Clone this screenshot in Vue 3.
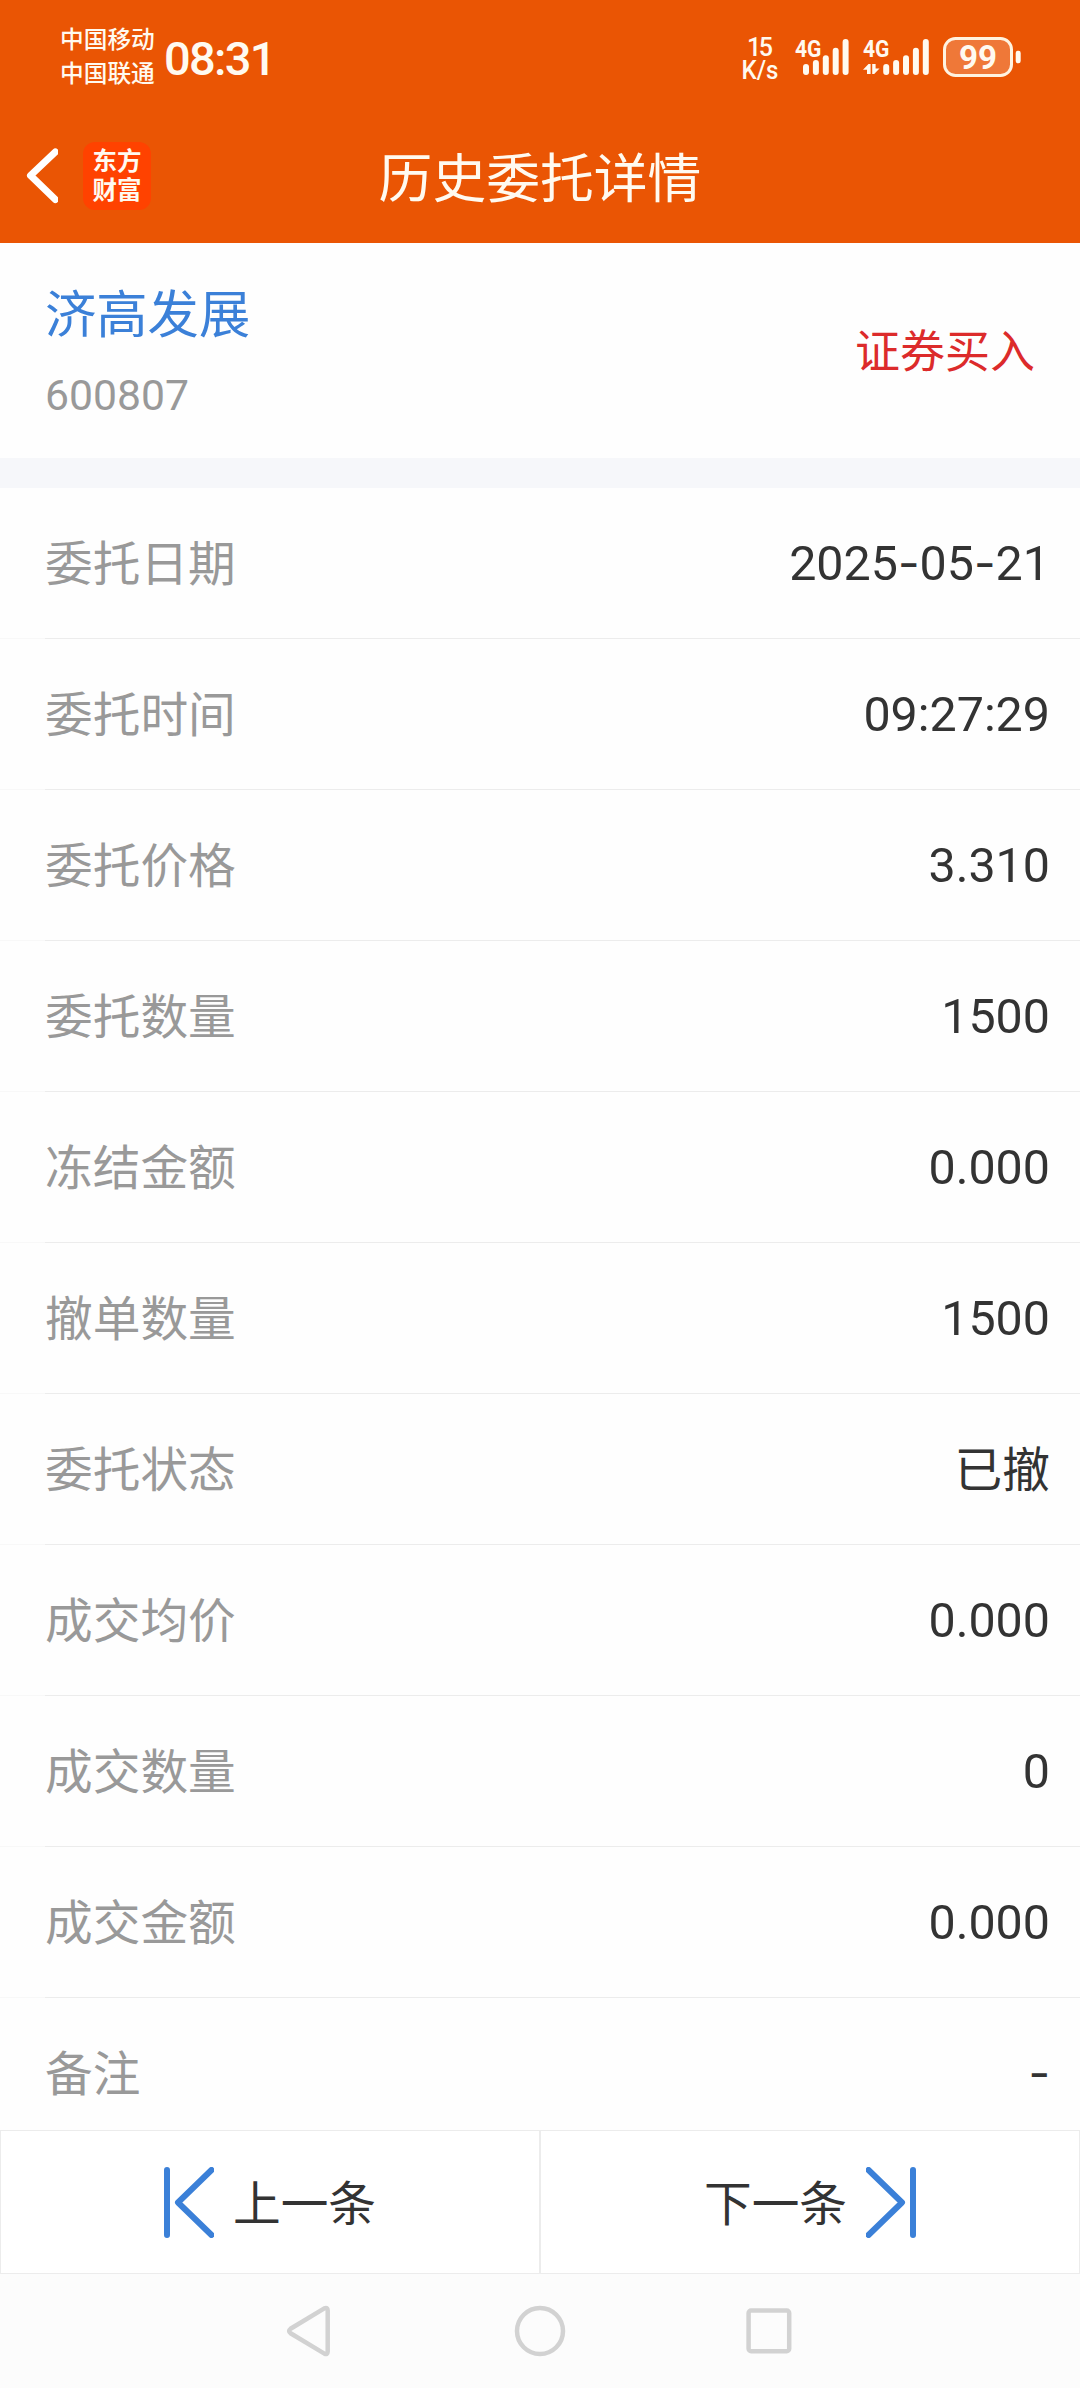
<script setup>
const rows = [
  { label: '委托日期', value: '2025-05-21' },
  { label: '委托时间', value: '09:27:29' },
  { label: '委托价格', value: '3.310' },
  { label: '委托数量', value: '1500' },
  { label: '冻结金额', value: '0.000' },
  { label: '撤单数量', value: '1500' },
  { label: '委托状态', value: '已撤', cjk: true },
  { label: '成交均价', value: '0.000' },
  { label: '成交数量', value: '0' },
  { label: '成交金额', value: '0.000' },
  { label: '备注', value: '-' },
]
// Hyphens are set in a wider face than the digits.
const parts = (value) => value.split(/(-)/).filter(Boolean)
const bars = [
  { x: 0, top: 64 },
  { x: 9.9, top: 60 },
  { x: 19.8, top: 55.3 },
  { x: 29.7, top: 47.7 },
  { x: 39.6, top: 39 },
]
</script>

<template>
  <div class="screen">
    <header class="top">
      <div class="status">
        <div class="carriers">
          <span>中国移动</span>
          <span>中国联通</span>
        </div>
        <div class="clock">08:31</div>
        <svg class="indicators" width="300" height="120" viewBox="730 0 300 120">
          <g class="small">
            <text x="747" y="56" textLength="26">15</text>
            <text x="741.5" y="78.5" textLength="37" lengthAdjust="spacingAndGlyphs">K/s</text>
          </g>
          <g class="net">
            <text x="795" y="57" textLength="26.5" lengthAdjust="spacingAndGlyphs">4G</text>
            <text x="863" y="57" textLength="26.5" lengthAdjust="spacingAndGlyphs">4G</text>
          </g>
          <g fill="#fffaf0">
            <rect v-for="b in bars" :key="'a' + b.x" :x="803 + b.x" :y="b.top" width="6" :height="75 - b.top" rx="3" />
            <rect v-for="b in bars" :key="'b' + b.x" :x="883.2 + b.x" :y="b.top" width="6" :height="75 - b.top" rx="3" />
            <path d="M863 69.8 L868.5 64 H870.6 V74 H867 V69.8 Z" />
            <path d="M872.2 64 H875.6 V68.5 H879.5 L874.2 74 H872.2 Z" />
            <rect x="1015.7" y="50.7" width="5" height="12.6" rx="2.2" />
          </g>
          <rect x="944.5" y="38.5" width="67" height="37" rx="11" fill="#ef7838" stroke="#fff3e0" stroke-width="3" />
          <text class="battery" x="959" y="69" textLength="38" lengthAdjust="spacingAndGlyphs">99</text>
        </svg>
      </div>
      <div class="titlebar">
        <svg class="back" width="32" height="60" viewBox="26 146 32 60">
          <path d="M55.3 152 L30.5 175.5 L55.3 199.5" fill="none" stroke="#fff" stroke-width="7" stroke-linecap="round" stroke-linejoin="round" />
        </svg>
        <div class="logo"><span>东方</span><span>财富</span></div>
        <h1>历史委托详情</h1>
      </div>
    </header>

    <section class="summary">
      <div>
        <div class="name">济高发展</div>
        <div class="code">600807</div>
      </div>
      <div class="side">证券买入</div>
    </section>

    <main class="list">
      <div v-for="r in rows" :key="r.label" class="row">
        <span class="label">{{ r.label }}</span>
        <span class="value" :class="{ cjk: r.cjk }"><span v-for="(p, i) in parts(r.value)" :key="i" :class="{ dash: p === '-' }">{{ p }}</span></span>
      </div>
    </main>

    <footer class="pager">
      <button>
        <svg width="50" height="71" viewBox="0 0 50 71">
          <path d="M3 3 V68 M47.5 3 L14 35.5 L47.5 68" />
        </svg>
        <span>上一条</span>
      </button>
      <button>
        <span>下一条</span>
        <svg width="50" height="71" viewBox="0 0 50 71">
          <path d="M47 3 V68 M2.5 3 L36 35.5 L2.5 68" />
        </svg>
      </button>
    </footer>

    <nav class="sysnav">
      <svg width="1080" height="114" viewBox="0 2274 1080 114" fill="none" stroke="#d2d2d2" stroke-width="4.5">
        <path d="M324.3 2308.4 L290.6 2328.7 Q287.6 2331 290.6 2333.3 L324.3 2353.6 Q327.7 2355 327.7 2351.5 V2310.5 Q327.7 2307 324.3 2308.4 Z" />
        <circle cx="540" cy="2331" r="23" />
        <rect x="748.6" y="2310.6" width="40.6" height="40.6" rx="2.5" />
      </svg>
    </nav>
  </div>
</template>

<style>
body {
  margin: 0;
  background: #fff;
}
</style>

<style scoped>
.screen {
  width: 1080px;
  height: 2388px;
  display: flex;
  flex-direction: column;
  overflow: hidden;
  background: #fefefe;
  font-family: Roboto, "Noto Sans CJK SC", sans-serif;
}
.top {
  height: 243px;
  flex: none;
  background: #ea5504;
  color: #fffaf0;
}
.status {
  height: 120px;
  display: flex;
}
.carriers {
  width: 96px;
  margin: 23px 0 0 60px;
  display: flex;
  flex-direction: column;
  font-size: 23.7px;
  font-weight: 500;
  line-height: 34px;
  white-space: nowrap;
}
.clock {
  margin: 31px 0 0 8px;
  font-size: 47px;
  font-weight: 500;
  line-height: 56px;
  letter-spacing: -1.7px;
}
.indicators {
  margin-left: auto;
  margin-right: 50px;
}
.indicators text {
  fill: #fffaf0;
  font-family: Roboto, sans-serif;
}
.small text {
  font-size: 25px;
  font-weight: 500;
}
.net text {
  font-size: 24.5px;
  font-weight: 700;
}
.indicators .battery {
  font-size: 34px;
  font-weight: 700;
}
.titlebar {
  position: relative;
  height: 123px;
  display: flex;
  align-items: flex-start;
}
.back {
  margin: 26px 0 0 26px;
}
.logo {
  width: 68px;
  height: 68px;
  margin: 22px 0 0 25px;
  padding-bottom: 5px;
  box-sizing: border-box;
  border-radius: 12px;
  background: #ff4200;
  display: flex;
  flex-direction: column;
  align-items: center;
  justify-content: center;
  font-family: "Noto Sans CJK SC", sans-serif;
  font-size: 24.5px;
  font-weight: 700;
  line-height: 29px;
}
h1 {
  position: absolute;
  left: 0;
  right: 0;
  top: 20px;
  margin: 0;
  text-align: center;
  font-size: 53.8px;
  font-weight: 400;
  line-height: 80px;
  color: #fffaf0;
}
.summary {
  height: 215px;
  flex: none;
  box-sizing: border-box;
  padding: 0 45px;
  display: flex;
  justify-content: space-between;
}
.name {
  margin-top: 37px;
  font-size: 51.3px;
  line-height: 72px;
  color: #3b80d8;
}
.code {
  margin-top: 15px;
  font-size: 42.7px;
  line-height: 56px;
  color: #999;
}
.side {
  margin-top: 78px;
  font-size: 45px;
  line-height: 64px;
  color: #dc2b2b;
}
.list {
  height: 1672px;
  flex: none;
  box-sizing: border-box;
  border-top: 30px solid #f6f7fa;
  overflow: hidden;
}
.row {
  height: 151px;
  box-sizing: border-box;
  padding: 0 30px 1px 45px;
  display: flex;
  align-items: center;
  justify-content: space-between;
  background: linear-gradient(to right, #f8f8f8 45px, #ececec 45px) bottom / 100% 1px no-repeat;
  font-size: 47.7px;
}
.label {
  padding-bottom: 6px;
  color: #999;
}
.value {
  color: #333;
  font-size: 48.4px;
}
.value.cjk {
  padding-bottom: 6px;
  font-size: 47.7px;
}
.dash {
  font-family: Inter, sans-serif;
  font-size: 47px;
  line-height: 1;
}
.pager {
  height: 144px;
  flex: none;
  display: flex;
}
button {
  flex: 1;
  box-sizing: border-box;
  padding: 0;
  border: 1px solid #ececec;
  background: #fff;
  display: flex;
  align-items: center;
  justify-content: center;
  gap: 19px;
  font: 400 47.7px Roboto, "Noto Sans CJK SC", sans-serif;
  color: #333;
}
button span {
  padding-bottom: 3px;
}
button path {
  fill: none;
  stroke: #3b80d8;
  stroke-width: 6;
  stroke-linecap: round;
  stroke-linejoin: round;
}
.sysnav {
  flex: 1;
  background: #fcfcfc;
}
.sysnav svg {
  display: block;
}
</style>
